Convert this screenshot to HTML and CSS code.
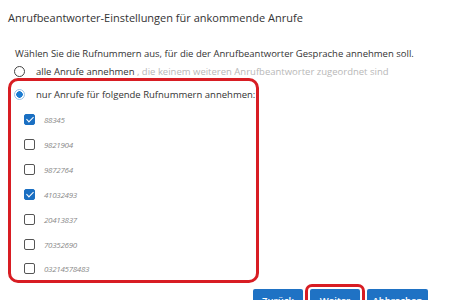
FILE: index.html
```html
<!DOCTYPE html>
<html lang="de">
  <head>
    <meta charset="UTF-8" />
    <title>Anrufbeantworter-Einstellungen</title>
    <link rel="stylesheet" href="styles.css">
  </head>
  <body>
    <h1>Anrufbeantworter-Einstellungen für ankommende Anrufe</h1>

    <p class="intro">Wählen Sie die Rufnummern aus, für die der Anrufbeantworter Gesprache annehmen soll.</p>

    <label class="option">
      <span class="radio"></span>
      <span>alle Anrufe annehmen <span class="hint">, die keinem weiteren Anrufbeantworter zugeordnet sind</span></span>
    </label>

    <div class="highlight">
      <label class="option">
        <span class="radio checked"></span>
        <span>nur Anrufe für folgende Rufnummern annehmen:</span>
      </label>

      <ul class="numbers">
        <li><span class="box checked"></span><span class="num">88345</span></li>
        <li><span class="box"></span><span class="num">9821904</span></li>
        <li><span class="box"></span><span class="num">9872764</span></li>
        <li><span class="box checked"></span><span class="num">41032493</span></li>
        <li><span class="box"></span><span class="num">20413837</span></li>
        <li><span class="box"></span><span class="num">70352690</span></li>
        <li><span class="box"></span><span class="num">03214578483</span></li>
      </ul>
    </div>

    <div class="actions">
      <button>Zurück</button>
      <button class="marked">Weiter</button>
      <button>Abbrechen</button>
    </div>
  </body>
</html>
```

FILE: styles.css
```css
body {
  font-family: "Open Sans", "Noto Sans", sans-serif;
  color: #333;
  background: #fff;
  margin: 0;
  padding: 10px 0 0 8px;
  font-size: 9.5px;
}

h1 {
  font-size: 11px;
  font-weight: normal;
  margin: 0 0 22px 0;
  color: #333;
}

.intro {
  margin: 0 0 2px 7px;
}

.option {
  display: flex;
  align-items: center;
  gap: 11px;
  height: 18px;
  margin-left: 6px;
}

.radio {
  width: 9px;
  height: 9px;
  border: 1.5px solid #444;
  border-radius: 50%;
  flex-shrink: 0;
}

.radio.checked {
  border-color: #9bc4e6;
  background: radial-gradient(circle, #1c7cd1 0 3px, #fff 3.5px);
}

.hint {
  color: #b8b8b8;
}

.highlight {
  width: 245px;
  margin-top: -2px;
  border: 3px solid #d81d23;
  border-radius: 10px;
  padding: 4px 0 0 0;
}

.highlight .option {
  margin-left: 3px;
}

.numbers {
  list-style: none;
  margin: 4px 0 0 0;
  padding: 0;
}

.numbers li {
  display: flex;
  align-items: center;
  gap: 9px;
  height: 25px;
  margin-left: 13px;
}

.numbers li:last-child {
  height: 23px;
}

.box {
  width: 9px;
  height: 9px;
  border: 1.2px solid #555;
  border-radius: 2px;
  flex-shrink: 0;
}

.box.checked {
  border-color: #1a6fc2;
  background: #1a6fc2;
  position: relative;
}

.box.checked::after {
  content: "";
  position: absolute;
  left: 2.5px;
  top: 0px;
  width: 3px;
  height: 6px;
  border: solid #fff;
  border-width: 0 1.6px 1.6px 0;
  transform: rotate(45deg);
}

.num {
  color: #8a8a8a;
  font-size: 8px;
  letter-spacing: -0.3px;
  font-style: italic;
}

.actions {
  display: flex;
  gap: 7px;
  margin: 6px 0 0 245px;
}

button {
  font-family: inherit;
  background: #1f72c4;
  color: #fff;
  border: none;
  border-radius: 2px;
  font-size: 9.5px;
  font-weight: 600;
  padding: 0;
  width: 50px;
  height: 22px;
}

button:last-child {
  width: 61px;
}

.marked {
  outline: 3px solid #d81d23;
  outline-offset: 2px;
  border-radius: 2px;
}
```
